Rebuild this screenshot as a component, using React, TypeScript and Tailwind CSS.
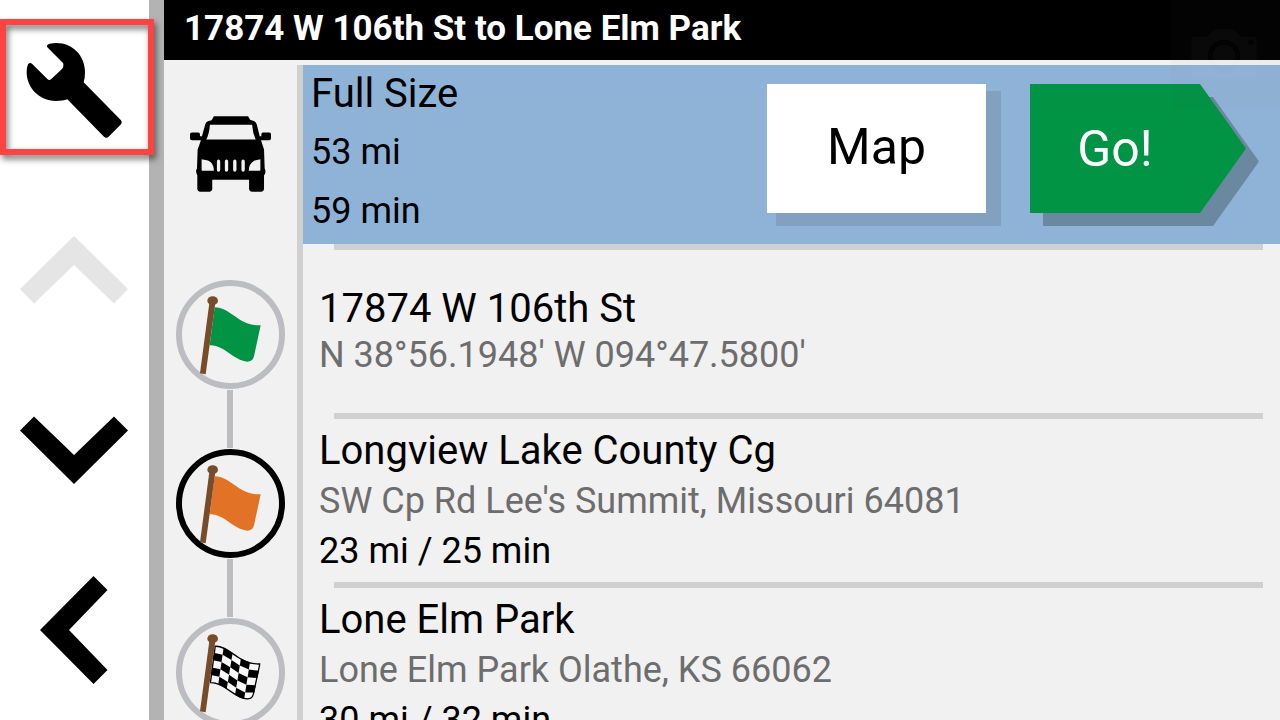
import { ReactNode } from 'react'
import clsx from 'clsx'

type FlagKind = 'start' | 'via' | 'finish'

interface Stop {
  name: string
  address: string
  leg?: string
  flag: FlagKind
  active?: boolean
}

const stops: Stop[] = [
  {
    name: '17874 W 106th St',
    address: "N 38°56.1948' W 094°47.5800'",
    flag: 'start',
  },
  {
    name: 'Longview Lake County Cg',
    address: "SW Cp Rd Lee's Summit, Missouri 64081",
    leg: '23 mi / 25 min',
    flag: 'via',
    active: true,
  },
  {
    name: 'Lone Elm Park',
    address: 'Lone Elm Park Olathe, KS 66062',
    leg: '30 mi / 32 min',
    flag: 'finish',
  },
]

const FLAG_PATH =
  'M134 111C185 112 205 168 272 165L252 258Q248 274 232 274C190 270 160 222 119 225Z'

// top and bottom edges of the checkered cloth, left to right
const TOP = [[134, 111], [161, 117], [188, 133], [213, 149], [240, 161], [272, 166]]
const BOTTOM = [[119, 222], [145, 227], [170, 243], [195, 261], [222, 275], [250, 274]]

function cell(col: number, row: number) {
  const at = (c: number, r: number) => {
    const t = r / 5
    const x = TOP[c][0] + (BOTTOM[c][0] - TOP[c][0]) * t
    const y = TOP[c][1] + (BOTTOM[c][1] - TOP[c][1]) * t
    return `${x},${y}`
  }
  return [at(col, row), at(col + 1, row), at(col + 1, row + 1), at(col, row + 1)].join(' ')
}

function Checkers() {
  const cells: ReactNode[] = []
  for (let row = 0; row < 5; row++) {
    for (let col = 0; col < 5; col++) {
      if ((row + col) % 2 === 1) {
        cells.push(<polygon key={`${row}-${col}`} points={cell(col, row)} />)
      }
    }
  }
  return (
    <>
      <clipPath id="cloth">
        <path d={FLAG_PATH} />
      </clipPath>
      <path d={FLAG_PATH} fill="#f8f8f8" />
      <g clipPath="url(#cloth)">
        {cells}
        <path d={FLAG_PATH} fill="none" stroke="#000" strokeWidth="8" />
      </g>
    </>
  )
}

function FlagBadge({ flag, active }: { flag: FlagKind; active?: boolean }) {
  return (
    <svg viewBox="18 29 327 327" className="size-[109px] shrink-0" aria-hidden="true">
      <circle
        cx="181.5"
        cy="192.5"
        r="154.5"
        fill="none"
        stroke={active ? '#000' : '#bcbdc1'}
        strokeWidth="18"
      />
      {flag === 'start' && <path d={FLAG_PATH} fill="#009444" />}
      {flag === 'via' && <path d={FLAG_PATH} fill="#e27225" />}
      {flag === 'finish' && <Checkers />}
      <path d="M118 98H136L107 312L90 309Z" fill="#774c2a" />
      <ellipse cx="128" cy="91" rx="16" ry="13" fill="#774c2a" />
    </svg>
  )
}

function Wrench() {
  return (
    <svg viewBox="79 126 288 288" className="size-24" aria-hidden="true">
      <path d="M143 142C140 137 143 133 150 131C210 119 256 162 256 216Q256 236 252 247L364 361Q368 367 364 373L327 410Q320 416 313 410L203 298Q190 303 168 303C118 302 81 263 81 216Q81 203 85 193Q90 186 97 191L143 237Q148 243 154 238L187 207Q191 203 191 198V192Q191 189 187 186Z" />
    </svg>
  )
}

function Jeep() {
  return (
    <svg viewBox="58 47 244 229" className="h-[76px] w-[81px]" aria-hidden="true">
      <path
        fillRule="evenodd"
        d="M130 48H233L239 58L252 63Q257 66 259 72L268 108H273V102Q273 97 278 97H297Q302 97 302 102V115Q302 120 297 120H272L281 148L283 205Q287 212 284 221L281 226V268Q280 275 273 275H244Q237 275 236 268V239H125V268Q124 275 117 275H88Q81 275 80 268V226L77 218Q75 211 79 205L81 148L91 120H64Q58 120 58 115V102Q58 97 64 97H83Q88 97 88 102V108H94L104 72Q106 65 112 63L123 60ZM118 73Q116 100 107 118H256Q247 98 245 73Z
        M93 177L112 181Q130 188 130 212H95Q93 212 93 209ZM270 177L253 181Q235 190 235 212H268Q270 212 270 209ZM144 178Q139 178 139 184V209Q139 215 144 215Q149 215 149 209V184Q149 178 144 178ZM168 178Q163 178 163 184V209Q163 215 168 215Q173 215 173 209V184Q173 178 168 178ZM193 178Q188 178 188 184V209Q188 215 193 215Q198 215 198 209V184Q198 178 193 178ZM218 178Q213 178 213 184V209Q213 215 218 215Q223 215 223 209V184Q223 178 218 178Z"
      />
    </svg>
  )
}

function Camera() {
  return (
    <svg viewBox="95 87 196 150" className="h-[50px] w-[66px]" fill="#fff" aria-hidden="true">
      <path
        fillRule="evenodd"
        d="M105 110H135Q143 110 148 105L160 92Q165 87 172 87H214Q221 87 226 92L238 105Q243 110 250 110H281Q291 110 291 120V227Q291 237 281 237H105Q95 237 95 227V120Q95 110 105 110ZM193 119A49 49 0 1 0 193 217A49 49 0 1 0 193 119ZM274 118A9 9 0 1 0 274 136A9 9 0 1 0 274 118Z"
      />
      <circle cx="193" cy="168" r="34" />
    </svg>
  )
}

function SideButton({ label, disabled, children }: { label: string; disabled?: boolean; children: ReactNode }) {
  return (
    <button
      type="button"
      aria-label={label}
      disabled={disabled}
      className="relative flex w-full flex-1 items-center justify-center pr-px"
    >
      {children}
    </button>
  )
}

function Sidebar() {
  return (
    <nav className="relative z-10 flex w-[164px] shrink-0 flex-col border-r-[15px] border-[#b3b3b3] bg-white">
      <SideButton label="Settings">
        <span className="absolute top-[19px] left-0 h-[136px] w-[154px] border-[6px] border-[#ff4343] drop-shadow-[2px_4px_3px_rgba(0,0,0,0.55)]" />
        <Wrench />
      </SideButton>
      <SideButton label="Scroll up" disabled>
        <svg viewBox="0 0 108 68" className="h-[68px] w-[108px]" fill="#e5e5e5" aria-hidden="true">
          <path d="M54 0L108 53L94 67.500L54 29L14 67.500L0 53Z" />
        </svg>
      </SideButton>
      <SideButton label="Scroll down">
        <svg viewBox="0 0 108 68" className="h-[68px] w-[108px]" aria-hidden="true">
          <path d="M54 68L108 14.500L94 0.500L54 39L14 0.500L0 14.500Z" />
        </svg>
      </SideButton>
      <SideButton label="Back">
        <svg viewBox="0 0 68 108" className="h-[108px] w-[68px]" aria-hidden="true">
          <path d="M0 54L53.500 0L67.500 14L29 54L67.500 94L53.500 108Z" />
        </svg>
      </SideButton>
    </nav>
  )
}

function Separator() {
  return <div className="mr-[17px] ml-[31px] h-1.5 shrink-0 bg-[#d0d0d0]" />
}

function Summary() {
  return (
    <section className="mt-[5px] flex shrink-0">
      <div className="flex w-[139px] shrink-0 items-center justify-center border-r-[6px] border-[#d0d0d0] pb-2">
        <Jeep />
      </div>
      <div className="flex-1">
        <div className="flex h-[179px] items-start bg-[#8fb3d6] pr-[34px] pl-2">
          <div className="text-[36px] leading-[59px]">
            <h2 className="text-[40px] leading-[58px]">Full Size</h2>
            <p>53 mi</p>
            <p>59 min</p>
          </div>
          <div className="mt-[19px] ml-auto flex gap-11 text-[50px] leading-[50px]">
            <button
              type="button"
              className="h-[129px] w-[219px] bg-white pb-1 shadow-[12px_10px_0_3px_#82a1c1]"
            >
              Map
            </button>
            <button type="button" className="relative h-[129px] w-[216px] pr-[46px] text-white">
              <svg
                viewBox="0 0 216 129"
                className="absolute inset-0 h-full w-full overflow-visible"
                aria-hidden="true"
              >
                <path d="M13 13H183L229 77.500L183 142H13Z" fill="#6b88a1" />
                <path d="M0 0H170L216 64.500L170 129H0Z" fill="#009444" />
              </svg>
              <span className="relative">Go!</span>
            </button>
          </div>
        </div>
        <Separator />
      </div>
    </section>
  )
}

function StopRow({ stop, first, last }: { stop: Stop; first: boolean; last: boolean }) {
  return (
    <li className="flex h-[169px] shrink-0">
      <div className="flex w-[139px] shrink-0 flex-col items-center gap-px border-r-[6px] border-[#d0d0d0]">
        <span className={clsx('mr-px w-1.5 flex-1', !first && 'bg-[#bcbdc0]')} />
        <FlagBadge flag={stop.flag} active={stop.active} />
        <span className={clsx('mr-px w-1.5 flex-1', !last && 'bg-[#bcbdc0]')} />
      </div>
      <div className="flex flex-1 flex-col">
        <div
          className={clsx(
            'flex flex-1 flex-col justify-center pl-4 text-[36px] whitespace-nowrap',
            stop.leg ? 'leading-[50px]' : 'leading-[46px]'
          )}
        >
          <h3 className="text-[40px] leading-[inherit]">{stop.name}</h3>
          <p className="text-[#6d6d6d]">{stop.address}</p>
          {stop.leg && <p>{stop.leg}</p>}
        </div>
        <Separator />
      </div>
    </li>
  )
}

export default function App() {
  return (
    <div className="flex h-screen overflow-hidden bg-[#f1f1f1] font-['Roboto',sans-serif] text-black">
      <Sidebar />
      <main className="relative flex min-w-0 flex-1 flex-col">
        <header className="h-[60px] shrink-0 bg-black pl-5">
          <h1 className="text-[35px] leading-[58px] font-bold text-white">
            17874 W 106th St to Lone Elm Park
          </h1>
        </header>
        <Summary />
        <ul className="flex flex-col">
          {stops.map((stop, i) => (
            <StopRow
              key={stop.name}
              stop={stop}
              first={i === 0}
              last={i === stops.length - 1}
            />
          ))}
        </ul>
        <div className="pointer-events-none absolute top-0 right-0 flex h-[109px] w-[109px] items-center justify-center bg-[#506070]/[0.03] pr-1 pb-0.5">
          <div className="opacity-[0.025]">
            <Camera />
          </div>
        </div>
      </main>
    </div>
  )
}
